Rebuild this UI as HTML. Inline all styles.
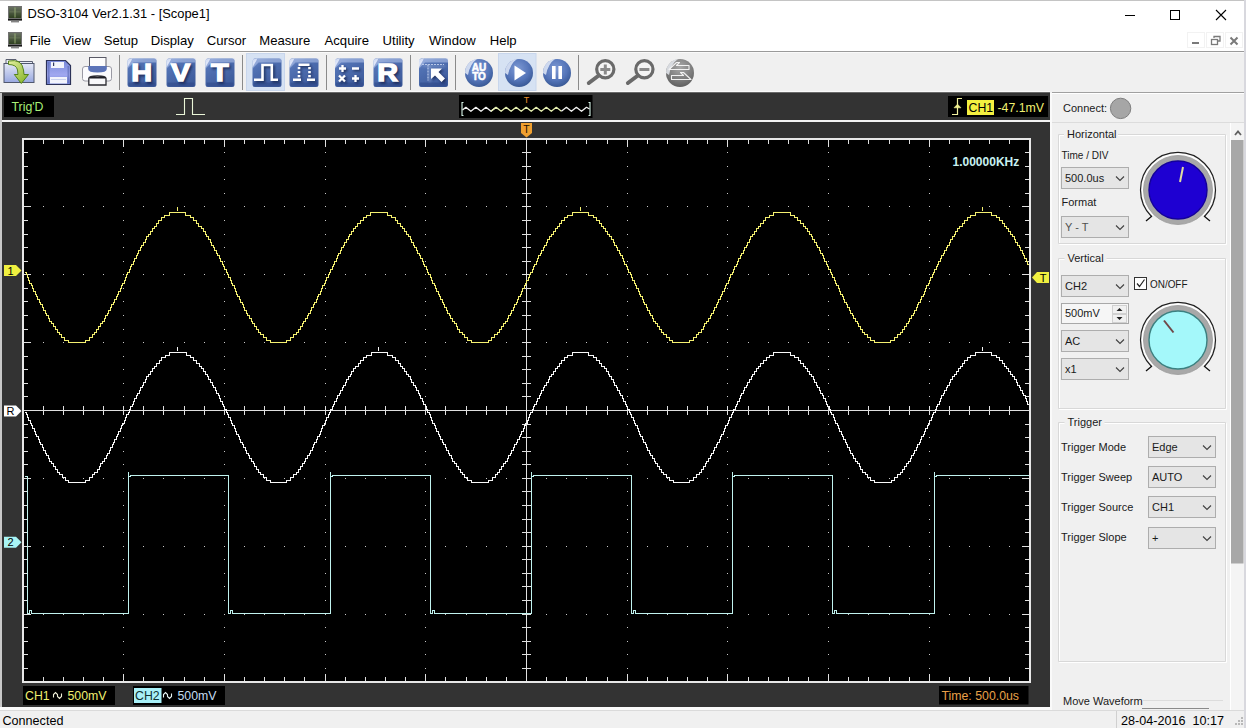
<!DOCTYPE html>
<html><head><meta charset="utf-8"><title>DSO-3104</title>
<style>html,body{margin:0;padding:0;background:#f0f0f0;overflow:hidden;width:1246px;height:728px}svg{display:block}</style>
</head><body>
<svg width="1246" height="728" viewBox="0 0 1246 728">
<rect x="0" y="0" width="1246" height="728" fill="#f0f0f0"/>
<rect x="0" y="0" width="1246" height="51" fill="#ffffff"/>
<rect x="0" y="0" width="1246" height="1" fill="#c4c4c4"/>
<rect x="0" y="51" width="1246" height="1" fill="#9a9a9a"/>
<rect x="0" y="52" width="1246" height="1" fill="#fafafa"/>
<rect x="0" y="91" width="1050" height="1" fill="#fafafa"/>
<rect x="1052" y="92" width="192" height="1" fill="#a0a0a0"/>
<rect x="1052" y="93" width="192" height="1" fill="#ffffff"/>
<rect x="1244" y="0" width="2" height="728" fill="#d8d8de"/>
<g transform="translate(8,6)"><rect x="0" y="0" width="14" height="13" fill="#707070"/><rect x="1" y="1" width="12" height="11" fill="url(#scr)"/><rect x="6.5" y="1.5" width="1" height="10" fill="#a8c080" opacity="0.8"/><rect x="1.5" y="5.5" width="11" height="0.8" fill="#8a9a70" opacity="0.5"/><rect x="0" y="13" width="14" height="1.6" fill="#181818"/><rect x="3" y="15.3" width="8" height="1" fill="#505050"/></g>
<text x="27.5" y="18" font-family="Liberation Sans, sans-serif" font-size="12.9" fill="#000">DSO-3104 Ver2.1.31 - [Scope1]</text>
<rect x="1125" y="15" width="10" height="1" fill="#000"/>
<rect x="1170.5" y="10.5" width="9" height="9" fill="none" stroke="#000" stroke-width="1"/>
<path d="M1216 10 L1226 20 M1226 10 L1216 20" stroke="#000" stroke-width="1.1"/>
<g transform="translate(8,32)"><rect x="0" y="0" width="14" height="13" fill="#707070"/><rect x="1" y="1" width="12" height="11" fill="url(#scr)"/><rect x="6.5" y="1.5" width="1" height="10" fill="#a8c080" opacity="0.8"/><rect x="1.5" y="5.5" width="11" height="0.8" fill="#8a9a70" opacity="0.5"/><rect x="0" y="13" width="14" height="1.6" fill="#181818"/><rect x="3" y="15.3" width="8" height="1" fill="#505050"/></g>
<text x="29.8" y="45" font-family="Liberation Sans, sans-serif" font-size="13.1" fill="#000">File</text>
<text x="62.8" y="45" font-family="Liberation Sans, sans-serif" font-size="13.1" fill="#000">View</text>
<text x="103.8" y="45" font-family="Liberation Sans, sans-serif" font-size="13.1" fill="#000">Setup</text>
<text x="150.8" y="45" font-family="Liberation Sans, sans-serif" font-size="13.1" fill="#000">Display</text>
<text x="206.8" y="45" font-family="Liberation Sans, sans-serif" font-size="13.1" fill="#000">Cursor</text>
<text x="259.3" y="45" font-family="Liberation Sans, sans-serif" font-size="13.1" fill="#000">Measure</text>
<text x="324.6" y="45" font-family="Liberation Sans, sans-serif" font-size="13.1" fill="#000">Acquire</text>
<text x="382.6" y="45" font-family="Liberation Sans, sans-serif" font-size="13.1" fill="#000">Utility</text>
<text x="429.1" y="45" font-family="Liberation Sans, sans-serif" font-size="13.1" fill="#000">Window</text>
<text x="489.7" y="45" font-family="Liberation Sans, sans-serif" font-size="13.1" fill="#000">Help</text>
<rect x="1187.5" y="32.5" width="17" height="15" fill="none" stroke="#e4e4e4" stroke-width="1" stroke-dasharray="1,1"/>
<rect x="1206.5" y="32.5" width="17" height="15" fill="none" stroke="#e4e4e4" stroke-width="1" stroke-dasharray="1,1"/>
<rect x="1225.5" y="32.5" width="17" height="15" fill="none" stroke="#e4e4e4" stroke-width="1" stroke-dasharray="1,1"/>
<rect x="1192" y="42" width="7" height="2" fill="#7a7a7a"/>
<rect x="1211.5" y="39.5" width="6" height="5" fill="none" stroke="#7a7a7a" stroke-width="1.3"/><path d="M1214 38 V36.5 H1220 V41 H1218" fill="none" stroke="#7a7a7a" stroke-width="1.3"/>
<path d="M1230.5 37.5 L1237.5 44.5 M1237.5 37.5 L1230.5 44.5" stroke="#7a7a7a" stroke-width="2"/>
<rect x="119.0" y="55" width="1" height="35" fill="#8a8a8a"/>
<rect x="242.0" y="55" width="1" height="35" fill="#8a8a8a"/>
<rect x="326.0" y="55" width="1" height="35" fill="#8a8a8a"/>
<rect x="410.0" y="55" width="1" height="35" fill="#8a8a8a"/>
<rect x="455.0" y="55" width="1" height="35" fill="#8a8a8a"/>
<rect x="578.0" y="55" width="1" height="35" fill="#8a8a8a"/>
<rect x="246.5" y="53.5" width="38" height="37" fill="#d6e2f3" stroke="#c8d6ec" stroke-width="1"/>
<rect x="498.5" y="53.5" width="37.5" height="37" fill="#d6e2f3" stroke="#c8d6ec" stroke-width="1"/>
<defs>
<linearGradient id="scr" x1="0" y1="0" x2="0" y2="1"><stop offset="0" stop-color="#6a7262"/><stop offset="1" stop-color="#2e4020"/></linearGradient>
<linearGradient id="bsq" x1="0" y1="0" x2="0.6" y2="1"><stop offset="0" stop-color="#7a96d0"/><stop offset="0.3" stop-color="#5272b4"/><stop offset="1" stop-color="#3e5c9c"/></linearGradient><filter id="soft" x="-10%" y="-10%" width="120%" height="120%"><feGaussianBlur stdDeviation="0.7"/></filter><filter id="shad" x="-20%" y="-20%" width="140%" height="140%"><feGaussianBlur stdDeviation="1.2"/></filter>
<radialGradient id="bcirc" cx="0.45" cy="0.35" r="0.7"><stop offset="0" stop-color="#7e9ad4"/><stop offset="0.6" stop-color="#5474b8"/><stop offset="1" stop-color="#34548f"/></radialGradient>
<radialGradient id="gcirc" cx="0.5" cy="0.3" r="0.75"><stop offset="0" stop-color="#a8a8a8"/><stop offset="0.6" stop-color="#7c7c7c"/><stop offset="1" stop-color="#5a5a5a"/></radialGradient>
<linearGradient id="folder" x1="0" y1="0" x2="0" y2="1"><stop offset="0" stop-color="#e4e8f6"/><stop offset="1" stop-color="#98a8e0"/></linearGradient><linearGradient id="flop" x1="0" y1="0" x2="0" y2="1"><stop offset="0" stop-color="#7888d8"/><stop offset="0.6" stop-color="#a0a8f0"/><stop offset="1" stop-color="#7080d0"/></linearGradient>
<linearGradient id="arrowg" x1="0" y1="0" x2="1" y2="1"><stop offset="0" stop-color="#e4f0a0"/><stop offset="1" stop-color="#80b020"/></linearGradient>
</defs>
<g transform="translate(127.5,58.5)"><g filter="url(#soft)"><rect x="0" y="0" width="29" height="28.5" rx="2.5" fill="url(#bsq)"/><rect x="1" y="24" width="27" height="4" fill="#2c4484" opacity="0.5"/><path d="M0 4 L6 0 H29 V4 H6 L0 10 Z" fill="#b8c8ec" opacity="0.55"/><path d="M0 1 L5 0 L0 9 Z" fill="#f0f4ff" opacity="0.8"/></g><g transform="translate(1.6,1.6)" filter="url(#shad)" opacity="0.75"><text x="0" y="0" transform="translate(14.2,22.6) scale(1.2,1)" text-anchor="middle" font-family="Liberation Sans, sans-serif" font-size="24" font-weight="bold" fill="#14204a" stroke="#14204a" stroke-width="1.3">H</text></g><text x="0" y="0" transform="translate(14.2,22.6) scale(1.2,1)" text-anchor="middle" font-family="Liberation Sans, sans-serif" font-size="24" font-weight="bold" fill="#fff" stroke="#fff" stroke-width="1.3">H</text></g>
<g transform="translate(166.5,58.5)"><g filter="url(#soft)"><rect x="0" y="0" width="29" height="28.5" rx="2.5" fill="url(#bsq)"/><rect x="1" y="24" width="27" height="4" fill="#2c4484" opacity="0.5"/><path d="M0 4 L6 0 H29 V4 H6 L0 10 Z" fill="#b8c8ec" opacity="0.55"/><path d="M0 1 L5 0 L0 9 Z" fill="#f0f4ff" opacity="0.8"/></g><g transform="translate(1.6,1.6)" filter="url(#shad)" opacity="0.75"><text x="0" y="0" transform="translate(14.2,22.6) scale(1.2,1)" text-anchor="middle" font-family="Liberation Sans, sans-serif" font-size="24" font-weight="bold" fill="#14204a" stroke="#14204a" stroke-width="1.3">V</text></g><text x="0" y="0" transform="translate(14.2,22.6) scale(1.2,1)" text-anchor="middle" font-family="Liberation Sans, sans-serif" font-size="24" font-weight="bold" fill="#fff" stroke="#fff" stroke-width="1.3">V</text></g>
<g transform="translate(205.5,58.5)"><g filter="url(#soft)"><rect x="0" y="0" width="29" height="28.5" rx="2.5" fill="url(#bsq)"/><rect x="1" y="24" width="27" height="4" fill="#2c4484" opacity="0.5"/><path d="M0 4 L6 0 H29 V4 H6 L0 10 Z" fill="#b8c8ec" opacity="0.55"/><path d="M0 1 L5 0 L0 9 Z" fill="#f0f4ff" opacity="0.8"/></g><g transform="translate(1.6,1.6)" filter="url(#shad)" opacity="0.75"><text x="0" y="0" transform="translate(14.2,22.6) scale(1.2,1)" text-anchor="middle" font-family="Liberation Sans, sans-serif" font-size="24" font-weight="bold" fill="#14204a" stroke="#14204a" stroke-width="1.3">T</text></g><text x="0" y="0" transform="translate(14.2,22.6) scale(1.2,1)" text-anchor="middle" font-family="Liberation Sans, sans-serif" font-size="24" font-weight="bold" fill="#fff" stroke="#fff" stroke-width="1.3">T</text></g>
<g transform="translate(252.5,58.5)"><g filter="url(#soft)"><rect x="0" y="0" width="29" height="28.5" rx="2.5" fill="url(#bsq)"/><rect x="1" y="24" width="27" height="4" fill="#2c4484" opacity="0.5"/><path d="M0 4 L6 0 H29 V4 H6 L0 10 Z" fill="#b8c8ec" opacity="0.55"/><path d="M0 1 L5 0 L0 9 Z" fill="#f0f4ff" opacity="0.8"/></g><g transform="translate(1.6,1.6)" filter="url(#shad)" opacity="0.75"><path d="M1.5 21.3 H10 V6.5 H19.3 V21.3 H25.5" fill="none" stroke="#14204a" stroke-width="2.6"/></g><path d="M1.5 21.3 H10 V6.5 H19.3 V21.3 H25.5" fill="none" stroke="#fff" stroke-width="2.6"/></g>
<g transform="translate(289.5,58.5)"><g filter="url(#soft)"><rect x="0" y="0" width="29" height="28.5" rx="2.5" fill="url(#bsq)"/><rect x="1" y="24" width="27" height="4" fill="#2c4484" opacity="0.5"/><path d="M0 4 L6 0 H29 V4 H6 L0 10 Z" fill="#b8c8ec" opacity="0.55"/><path d="M0 1 L5 0 L0 9 Z" fill="#f0f4ff" opacity="0.8"/></g><g transform="translate(1.6,1.6)" filter="url(#shad)" opacity="0.75"><path d="M3.5 21.3 H11.5 M17.5 21.3 H25.5 M9 6.2 H20" stroke="#14204a" stroke-width="2.4"/><path d="M9.5 8.5 V20 M20 8.5 V20" stroke="#14204a" stroke-width="2.6" stroke-dasharray="2.2,1.8"/></g><path d="M3.5 21.3 H11.5 M17.5 21.3 H25.5 M9 6.2 H20" stroke="#fff" stroke-width="2.4"/><path d="M9.5 8.5 V20 M20 8.5 V20" stroke="#fff" stroke-width="2.6" stroke-dasharray="2.2,1.8"/></g>
<g transform="translate(335,58.5)"><g filter="url(#soft)"><rect x="0" y="0" width="29" height="28.5" rx="2.5" fill="url(#bsq)"/><rect x="1" y="24" width="27" height="4" fill="#2c4484" opacity="0.5"/><path d="M0 4 L6 0 H29 V4 H6 L0 10 Z" fill="#b8c8ec" opacity="0.55"/><path d="M0 1 L5 0 L0 9 Z" fill="#f0f4ff" opacity="0.8"/></g><g transform="translate(1.6,1.6)" filter="url(#shad)" opacity="0.75"><path d="M4 10 H11 M7.5 6.5 V13.5 M17 10 H24 M4 17 L10 23 M10 17 L4 23 M17 20 H24 M20.5 16.5 V23.5" stroke="#14204a" stroke-width="2.3"/></g><path d="M4 10 H11 M7.5 6.5 V13.5 M17 10 H24 M4 17 L10 23 M10 17 L4 23 M17 20 H24 M20.5 16.5 V23.5" stroke="#fff" stroke-width="2.3"/></g>
<g transform="translate(373.5,58.5)"><g filter="url(#soft)"><rect x="0" y="0" width="29" height="28.5" rx="2.5" fill="url(#bsq)"/><rect x="1" y="24" width="27" height="4" fill="#2c4484" opacity="0.5"/><path d="M0 4 L6 0 H29 V4 H6 L0 10 Z" fill="#b8c8ec" opacity="0.55"/><path d="M0 1 L5 0 L0 9 Z" fill="#f0f4ff" opacity="0.8"/></g><g transform="translate(1.6,1.6)" filter="url(#shad)" opacity="0.75"><text x="0" y="0" transform="translate(14.2,22.6) scale(1.2,1)" text-anchor="middle" font-family="Liberation Sans, sans-serif" font-size="24" font-weight="bold" fill="#14204a" stroke="#14204a" stroke-width="1.3">R</text></g><text x="0" y="0" transform="translate(14.2,22.6) scale(1.2,1)" text-anchor="middle" font-family="Liberation Sans, sans-serif" font-size="24" font-weight="bold" fill="#fff" stroke="#fff" stroke-width="1.3">R</text></g>
<g transform="translate(419,58.5)"><g filter="url(#soft)"><rect x="0" y="0" width="29" height="28.5" rx="2.5" fill="url(#bsq)"/><rect x="1" y="24" width="27" height="4" fill="#2c4484" opacity="0.5"/><path d="M0 4 L6 0 H29 V4 H6 L0 10 Z" fill="#b8c8ec" opacity="0.55"/><path d="M0 1 L5 0 L0 9 Z" fill="#f0f4ff" opacity="0.8"/></g><g transform="translate(1.6,1.6)" filter="url(#shad)" opacity="0.75"><path d="M3 6 H25 M9 6 V22" stroke="#b8c8e8" stroke-width="1.2" stroke-dasharray="2,1"/><path d="M12 10 L23 10 L19.5 13.5 L26 20 L22.5 23.5 L16 17 L12 20.5 Z" fill="#14204a"/></g><path d="M3 6 H25 M9 6 V22" stroke="#b8c8e8" stroke-width="1.2" stroke-dasharray="2,1"/><path d="M12 10 L23 10 L19.5 13.5 L26 20 L22.5 23.5 L16 17 L12 20.5 Z" fill="#fff"/></g>
<g transform="translate(479,73)"><g filter="url(#soft)"><circle r="14" fill="url(#bcirc)"/><path d="M-14 0 A14 14 0 0 1 -2 -13.9 Q-9 -9 -11 2 Z" fill="#f4f8ff" opacity="0.75"/></g><text x="0" y="-2.2" text-anchor="middle" font-family="Liberation Sans, sans-serif" font-size="10" font-weight="bold" fill="#fff" stroke="#fff" stroke-width="0.5">AU</text><text x="0" y="7" text-anchor="middle" font-family="Liberation Sans, sans-serif" font-size="10" font-weight="bold" fill="#fff" stroke="#fff" stroke-width="0.5">TO</text></g>
<g transform="translate(519,73)"><g filter="url(#soft)"><circle r="14" fill="url(#bcirc)"/><path d="M-14 0 A14 14 0 0 1 -2 -13.9 Q-9 -9 -11 2 Z" fill="#f4f8ff" opacity="0.75"/></g><path d="M-4.5 -7.5 L7 0 L-4.5 7.5 Z" fill="#fff"/></g>
<g transform="translate(557,73)"><g filter="url(#soft)"><circle r="14" fill="url(#bcirc)"/><path d="M-14 0 A14 14 0 0 1 -2 -13.9 Q-9 -9 -11 2 Z" fill="#f4f8ff" opacity="0.75"/></g><rect x="-5" y="-7" width="3.6" height="13" fill="#fff"/><rect x="1.4" y="-7" width="3.6" height="13" fill="#fff"/></g>
<circle cx="605.3" cy="69.3" r="8.6" fill="#f4f4f4" stroke="#6a6a6a" stroke-width="3.2"/>
<path d="M598.8 75.5 L588.8 83" stroke="#6a6a6a" stroke-width="4" stroke-linecap="round"/>
<rect x="600.3" y="68" width="10" height="3" fill="#8a8a8a"/>
<rect x="603.8" y="64.5" width="3" height="10" fill="#8a8a8a"/>
<circle cx="644.4" cy="69.3" r="8.6" fill="#f4f4f4" stroke="#6a6a6a" stroke-width="3.2"/>
<path d="M637.9 75.5 L627.9 83" stroke="#6a6a6a" stroke-width="4" stroke-linecap="round"/>
<rect x="639.4" y="68" width="10" height="3" fill="#8a8a8a"/>
<g transform="translate(680,73)"><g filter="url(#soft)"><circle r="14" fill="url(#gcirc)"/><path d="M-14 0 A14 14 0 0 1 -2 -13.9 Q-9 -9 -11 2 Z" fill="#f4f8ff" opacity="0.75"/></g><path d="M9 -7.5 H-3.5 L-0.5 -10.5 H-3.5 L-11 -3.5 H9 Z M-8.5 2.5 H3.5 L0.5 -0.5 H3.5 L11 6.5 H-8.5 Z" fill="none" stroke="#f2f2f2" stroke-width="1.1" stroke-linejoin="round"/></g>
<path d="M6 61.5 V59.5 H16 L17.5 61.5 H32.5 V64 H6 Z" fill="#e8ecf6" stroke="#5a5f70" stroke-width="1"/>
<rect x="4" y="63.5" width="30" height="19" fill="url(#folder)" stroke="#50586e" stroke-width="1"/>
<path d="M8.5 61 Q22 58.5 23.5 70 L24 74.5 L28.5 74.5 L21.3 83.5 L14.3 74.5 L18 74.5 L17.5 70 Q16.5 64.5 8.5 64.5 Z" fill="url(#arrowg)" stroke="#4a7a10" stroke-width="0.9"/>
<path d="M46.5 60.5 H65.5 L70.5 65.5 V84.5 H46.5 Z" fill="url(#flop)" stroke="#2c3258" stroke-width="1.2"/>
<rect x="51" y="62" width="13" height="6" fill="#f2f4fc"/><rect x="53" y="62.5" width="1.2" height="3.5" fill="#303860"/>
<rect x="50" y="77" width="17" height="6.5" fill="#f2f4fc"/><rect x="51" y="79" width="15" height="0.7" fill="#b8c4e8"/>
<rect x="48" y="62" width="1.5" height="21" fill="#5868b0" opacity="0.6"/><rect x="67.5" y="66" width="1.5" height="17" fill="#5868b0" opacity="0.6"/>
<rect x="82.5" y="66.5" width="29" height="14.5" rx="2.5" fill="#fbfbfd" stroke="#9a9aa4" stroke-width="1"/>
<rect x="89.5" y="57.5" width="16.5" height="9" fill="#fdfdfd" stroke="#5a5a66" stroke-width="1"/>
<path d="M88.2 66 H106.8 V69 Q106.8 72.5 97.5 72.5 Q88.2 72.5 88.2 69 Z" fill="#5c74b8"/>
<path d="M88.8 78.5 Q88.8 76 97.5 76 Q106 76 106 78.5 V85 H88.8 Z" fill="#f8f8fa" stroke="#2a2a30" stroke-width="1.3"/>
<rect x="89.5" y="77" width="16" height="1.5" fill="#202028"/>
<rect x="0" y="92" width="1050" height="1" fill="#6a6a6a"/>
<rect x="0" y="93" width="1050" height="614" fill="#333333"/>
<rect x="0" y="93" width="2" height="617" fill="#c8c8c8"/>
<rect x="1050" y="93" width="2" height="617" fill="#fafafa"/>
<rect x="0" y="707" width="1052" height="3" fill="#fafafa"/>
<rect x="2" y="120" width="1048" height="2" fill="#f4f4f4"/>
<rect x="4" y="96" width="50" height="21" fill="#000"/>
<text x="11.5" y="111" font-family="Liberation Sans, sans-serif" font-size="12.3" fill="#a8f078">Trig'D</text>
<path d="M176 114.5 H184.5 V98.5 H192.5 V114.5 H205" fill="none" stroke="#eaf6d8" stroke-width="1.1"/>
<rect x="459" y="95" width="133.5" height="23" fill="#000"/>
<polyline points="462.5,110 465.9,107.3 470.9,111.3 475.9,107.3 481.0,111.3 486.0,107.3 491.0,111.3 496.1,107.3" fill="none" stroke="#f4f4f4" stroke-width="1.3" stroke-linejoin="round"/>
<polyline points="491.0,111.3 496.1,107.3 501.1,111.3 506.1,107.3 511.1,111.3 516.1,107.3 521.2,111.3 526.2,107.3 531.2,111.3 536.2,107.3 541.3,111.3 546.3,107.3 551.3,111.3 556.3,107.3 561.4,111.3" fill="none" stroke="#e6f0b0" stroke-width="1.3" stroke-linejoin="round"/>
<polyline points="561.4,111.3 566.4,107.3 571.4,111.3 576.4,107.3 581.5,111.3 586.5,107.3 589.5,109" fill="none" stroke="#f4f4f4" stroke-width="1.3" stroke-linejoin="round"/>
<path d="M463.5 102.5 H462 V115.5 H463.5 M588.5 102.5 H590 V115.5 H588.5" fill="none" stroke="#d8f4e8" stroke-width="1.1"/>
<text x="526.5" y="103" text-anchor="middle" font-family="Liberation Sans, sans-serif" font-size="9" fill="#e89030">T</text>
<rect x="948" y="96" width="100" height="21" fill="#000"/>
<path d="M952 114.5 H957.5 V98.5 H962" fill="none" stroke="#f2f2a0" stroke-width="1.2"/><path d="M954 107.8 L957.5 104.2 L961 107.8 Z" fill="#f2f290" stroke="#f2f290" stroke-width="0.6"/>
<rect x="967" y="100" width="27" height="15" fill="#f4f040"/>
<text x="968.5" y="112" font-family="Liberation Sans, sans-serif" font-size="12.3" fill="#000">CH1</text>
<text x="997.5" y="112" font-family="Liberation Sans, sans-serif" font-size="12.3" fill="#f0f070">-47.1mV</text>
<rect x="22" y="138" width="1009" height="545" fill="#e8e8e8"/>
<rect x="24" y="140" width="1005" height="541" fill="#000"/>
<path d="M43 206h1v1h-1zM63 206h1v1h-1zM83 206h1v1h-1zM103 206h1v1h-1zM143 206h1v1h-1zM163 206h1v1h-1zM184 206h1v1h-1zM204 206h1v1h-1zM244 206h1v1h-1zM264 206h1v1h-1zM284 206h1v1h-1zM304 206h1v1h-1zM345 206h1v1h-1zM365 206h1v1h-1zM385 206h1v1h-1zM405 206h1v1h-1zM445 206h1v1h-1zM466 206h1v1h-1zM486 206h1v1h-1zM506 206h1v1h-1zM546 206h1v1h-1zM566 206h1v1h-1zM586 206h1v1h-1zM607 206h1v1h-1zM647 206h1v1h-1zM667 206h1v1h-1zM687 206h1v1h-1zM707 206h1v1h-1zM748 206h1v1h-1zM768 206h1v1h-1zM788 206h1v1h-1zM808 206h1v1h-1zM848 206h1v1h-1zM868 206h1v1h-1zM889 206h1v1h-1zM909 206h1v1h-1zM949 206h1v1h-1zM969 206h1v1h-1zM989 206h1v1h-1zM1009 206h1v1h-1zM43 274h1v1h-1zM63 274h1v1h-1zM83 274h1v1h-1zM103 274h1v1h-1zM143 274h1v1h-1zM163 274h1v1h-1zM184 274h1v1h-1zM204 274h1v1h-1zM244 274h1v1h-1zM264 274h1v1h-1zM284 274h1v1h-1zM304 274h1v1h-1zM345 274h1v1h-1zM365 274h1v1h-1zM385 274h1v1h-1zM405 274h1v1h-1zM445 274h1v1h-1zM466 274h1v1h-1zM486 274h1v1h-1zM506 274h1v1h-1zM546 274h1v1h-1zM566 274h1v1h-1zM586 274h1v1h-1zM607 274h1v1h-1zM647 274h1v1h-1zM667 274h1v1h-1zM687 274h1v1h-1zM707 274h1v1h-1zM748 274h1v1h-1zM768 274h1v1h-1zM788 274h1v1h-1zM808 274h1v1h-1zM848 274h1v1h-1zM868 274h1v1h-1zM889 274h1v1h-1zM909 274h1v1h-1zM949 274h1v1h-1zM969 274h1v1h-1zM989 274h1v1h-1zM1009 274h1v1h-1zM43 342h1v1h-1zM63 342h1v1h-1zM83 342h1v1h-1zM103 342h1v1h-1zM143 342h1v1h-1zM163 342h1v1h-1zM184 342h1v1h-1zM204 342h1v1h-1zM244 342h1v1h-1zM264 342h1v1h-1zM284 342h1v1h-1zM304 342h1v1h-1zM345 342h1v1h-1zM365 342h1v1h-1zM385 342h1v1h-1zM405 342h1v1h-1zM445 342h1v1h-1zM466 342h1v1h-1zM486 342h1v1h-1zM506 342h1v1h-1zM546 342h1v1h-1zM566 342h1v1h-1zM586 342h1v1h-1zM607 342h1v1h-1zM647 342h1v1h-1zM667 342h1v1h-1zM687 342h1v1h-1zM707 342h1v1h-1zM748 342h1v1h-1zM768 342h1v1h-1zM788 342h1v1h-1zM808 342h1v1h-1zM848 342h1v1h-1zM868 342h1v1h-1zM889 342h1v1h-1zM909 342h1v1h-1zM949 342h1v1h-1zM969 342h1v1h-1zM989 342h1v1h-1zM1009 342h1v1h-1zM43 478h1v1h-1zM63 478h1v1h-1zM83 478h1v1h-1zM103 478h1v1h-1zM143 478h1v1h-1zM163 478h1v1h-1zM184 478h1v1h-1zM204 478h1v1h-1zM244 478h1v1h-1zM264 478h1v1h-1zM284 478h1v1h-1zM304 478h1v1h-1zM345 478h1v1h-1zM365 478h1v1h-1zM385 478h1v1h-1zM405 478h1v1h-1zM445 478h1v1h-1zM466 478h1v1h-1zM486 478h1v1h-1zM506 478h1v1h-1zM546 478h1v1h-1zM566 478h1v1h-1zM586 478h1v1h-1zM607 478h1v1h-1zM647 478h1v1h-1zM667 478h1v1h-1zM687 478h1v1h-1zM707 478h1v1h-1zM748 478h1v1h-1zM768 478h1v1h-1zM788 478h1v1h-1zM808 478h1v1h-1zM848 478h1v1h-1zM868 478h1v1h-1zM889 478h1v1h-1zM909 478h1v1h-1zM949 478h1v1h-1zM969 478h1v1h-1zM989 478h1v1h-1zM1009 478h1v1h-1zM43 546h1v1h-1zM63 546h1v1h-1zM83 546h1v1h-1zM103 546h1v1h-1zM143 546h1v1h-1zM163 546h1v1h-1zM184 546h1v1h-1zM204 546h1v1h-1zM244 546h1v1h-1zM264 546h1v1h-1zM284 546h1v1h-1zM304 546h1v1h-1zM345 546h1v1h-1zM365 546h1v1h-1zM385 546h1v1h-1zM405 546h1v1h-1zM445 546h1v1h-1zM466 546h1v1h-1zM486 546h1v1h-1zM506 546h1v1h-1zM546 546h1v1h-1zM566 546h1v1h-1zM586 546h1v1h-1zM607 546h1v1h-1zM647 546h1v1h-1zM667 546h1v1h-1zM687 546h1v1h-1zM707 546h1v1h-1zM748 546h1v1h-1zM768 546h1v1h-1zM788 546h1v1h-1zM808 546h1v1h-1zM848 546h1v1h-1zM868 546h1v1h-1zM889 546h1v1h-1zM909 546h1v1h-1zM949 546h1v1h-1zM969 546h1v1h-1zM989 546h1v1h-1zM1009 546h1v1h-1zM43 614h1v1h-1zM63 614h1v1h-1zM83 614h1v1h-1zM103 614h1v1h-1zM143 614h1v1h-1zM163 614h1v1h-1zM184 614h1v1h-1zM204 614h1v1h-1zM244 614h1v1h-1zM264 614h1v1h-1zM284 614h1v1h-1zM304 614h1v1h-1zM345 614h1v1h-1zM365 614h1v1h-1zM385 614h1v1h-1zM405 614h1v1h-1zM445 614h1v1h-1zM466 614h1v1h-1zM486 614h1v1h-1zM506 614h1v1h-1zM546 614h1v1h-1zM566 614h1v1h-1zM586 614h1v1h-1zM607 614h1v1h-1zM647 614h1v1h-1zM667 614h1v1h-1zM687 614h1v1h-1zM707 614h1v1h-1zM748 614h1v1h-1zM768 614h1v1h-1zM788 614h1v1h-1zM808 614h1v1h-1zM848 614h1v1h-1zM868 614h1v1h-1zM889 614h1v1h-1zM909 614h1v1h-1zM949 614h1v1h-1zM969 614h1v1h-1zM989 614h1v1h-1zM1009 614h1v1h-1zM123 152h1v1h-1zM123 166h1v1h-1zM123 179h1v1h-1zM123 193h1v1h-1zM123 206h1v1h-1zM123 220h1v1h-1zM123 234h1v1h-1zM123 247h1v1h-1zM123 261h1v1h-1zM123 274h1v1h-1zM123 288h1v1h-1zM123 301h1v1h-1zM123 315h1v1h-1zM123 329h1v1h-1zM123 342h1v1h-1zM123 356h1v1h-1zM123 369h1v1h-1zM123 383h1v1h-1zM123 396h1v1h-1zM123 410h1v1h-1zM123 424h1v1h-1zM123 437h1v1h-1zM123 451h1v1h-1zM123 464h1v1h-1zM123 478h1v1h-1zM123 491h1v1h-1zM123 505h1v1h-1zM123 519h1v1h-1zM123 532h1v1h-1zM123 546h1v1h-1zM123 559h1v1h-1zM123 573h1v1h-1zM123 586h1v1h-1zM123 600h1v1h-1zM123 614h1v1h-1zM123 627h1v1h-1zM123 641h1v1h-1zM123 654h1v1h-1zM123 668h1v1h-1zM224 152h1v1h-1zM224 166h1v1h-1zM224 179h1v1h-1zM224 193h1v1h-1zM224 206h1v1h-1zM224 220h1v1h-1zM224 234h1v1h-1zM224 247h1v1h-1zM224 261h1v1h-1zM224 274h1v1h-1zM224 288h1v1h-1zM224 301h1v1h-1zM224 315h1v1h-1zM224 329h1v1h-1zM224 342h1v1h-1zM224 356h1v1h-1zM224 369h1v1h-1zM224 383h1v1h-1zM224 396h1v1h-1zM224 410h1v1h-1zM224 424h1v1h-1zM224 437h1v1h-1zM224 451h1v1h-1zM224 464h1v1h-1zM224 478h1v1h-1zM224 491h1v1h-1zM224 505h1v1h-1zM224 519h1v1h-1zM224 532h1v1h-1zM224 546h1v1h-1zM224 559h1v1h-1zM224 573h1v1h-1zM224 586h1v1h-1zM224 600h1v1h-1zM224 614h1v1h-1zM224 627h1v1h-1zM224 641h1v1h-1zM224 654h1v1h-1zM224 668h1v1h-1zM325 152h1v1h-1zM325 166h1v1h-1zM325 179h1v1h-1zM325 193h1v1h-1zM325 206h1v1h-1zM325 220h1v1h-1zM325 234h1v1h-1zM325 247h1v1h-1zM325 261h1v1h-1zM325 274h1v1h-1zM325 288h1v1h-1zM325 301h1v1h-1zM325 315h1v1h-1zM325 329h1v1h-1zM325 342h1v1h-1zM325 356h1v1h-1zM325 369h1v1h-1zM325 383h1v1h-1zM325 396h1v1h-1zM325 410h1v1h-1zM325 424h1v1h-1zM325 437h1v1h-1zM325 451h1v1h-1zM325 464h1v1h-1zM325 478h1v1h-1zM325 491h1v1h-1zM325 505h1v1h-1zM325 519h1v1h-1zM325 532h1v1h-1zM325 546h1v1h-1zM325 559h1v1h-1zM325 573h1v1h-1zM325 586h1v1h-1zM325 600h1v1h-1zM325 614h1v1h-1zM325 627h1v1h-1zM325 641h1v1h-1zM325 654h1v1h-1zM325 668h1v1h-1zM425 152h1v1h-1zM425 166h1v1h-1zM425 179h1v1h-1zM425 193h1v1h-1zM425 206h1v1h-1zM425 220h1v1h-1zM425 234h1v1h-1zM425 247h1v1h-1zM425 261h1v1h-1zM425 274h1v1h-1zM425 288h1v1h-1zM425 301h1v1h-1zM425 315h1v1h-1zM425 329h1v1h-1zM425 342h1v1h-1zM425 356h1v1h-1zM425 369h1v1h-1zM425 383h1v1h-1zM425 396h1v1h-1zM425 410h1v1h-1zM425 424h1v1h-1zM425 437h1v1h-1zM425 451h1v1h-1zM425 464h1v1h-1zM425 478h1v1h-1zM425 491h1v1h-1zM425 505h1v1h-1zM425 519h1v1h-1zM425 532h1v1h-1zM425 546h1v1h-1zM425 559h1v1h-1zM425 573h1v1h-1zM425 586h1v1h-1zM425 600h1v1h-1zM425 614h1v1h-1zM425 627h1v1h-1zM425 641h1v1h-1zM425 654h1v1h-1zM425 668h1v1h-1zM627 152h1v1h-1zM627 166h1v1h-1zM627 179h1v1h-1zM627 193h1v1h-1zM627 206h1v1h-1zM627 220h1v1h-1zM627 234h1v1h-1zM627 247h1v1h-1zM627 261h1v1h-1zM627 274h1v1h-1zM627 288h1v1h-1zM627 301h1v1h-1zM627 315h1v1h-1zM627 329h1v1h-1zM627 342h1v1h-1zM627 356h1v1h-1zM627 369h1v1h-1zM627 383h1v1h-1zM627 396h1v1h-1zM627 410h1v1h-1zM627 424h1v1h-1zM627 437h1v1h-1zM627 451h1v1h-1zM627 464h1v1h-1zM627 478h1v1h-1zM627 491h1v1h-1zM627 505h1v1h-1zM627 519h1v1h-1zM627 532h1v1h-1zM627 546h1v1h-1zM627 559h1v1h-1zM627 573h1v1h-1zM627 586h1v1h-1zM627 600h1v1h-1zM627 614h1v1h-1zM627 627h1v1h-1zM627 641h1v1h-1zM627 654h1v1h-1zM627 668h1v1h-1zM727 152h1v1h-1zM727 166h1v1h-1zM727 179h1v1h-1zM727 193h1v1h-1zM727 206h1v1h-1zM727 220h1v1h-1zM727 234h1v1h-1zM727 247h1v1h-1zM727 261h1v1h-1zM727 274h1v1h-1zM727 288h1v1h-1zM727 301h1v1h-1zM727 315h1v1h-1zM727 329h1v1h-1zM727 342h1v1h-1zM727 356h1v1h-1zM727 369h1v1h-1zM727 383h1v1h-1zM727 396h1v1h-1zM727 410h1v1h-1zM727 424h1v1h-1zM727 437h1v1h-1zM727 451h1v1h-1zM727 464h1v1h-1zM727 478h1v1h-1zM727 491h1v1h-1zM727 505h1v1h-1zM727 519h1v1h-1zM727 532h1v1h-1zM727 546h1v1h-1zM727 559h1v1h-1zM727 573h1v1h-1zM727 586h1v1h-1zM727 600h1v1h-1zM727 614h1v1h-1zM727 627h1v1h-1zM727 641h1v1h-1zM727 654h1v1h-1zM727 668h1v1h-1zM828 152h1v1h-1zM828 166h1v1h-1zM828 179h1v1h-1zM828 193h1v1h-1zM828 206h1v1h-1zM828 220h1v1h-1zM828 234h1v1h-1zM828 247h1v1h-1zM828 261h1v1h-1zM828 274h1v1h-1zM828 288h1v1h-1zM828 301h1v1h-1zM828 315h1v1h-1zM828 329h1v1h-1zM828 342h1v1h-1zM828 356h1v1h-1zM828 369h1v1h-1zM828 383h1v1h-1zM828 396h1v1h-1zM828 410h1v1h-1zM828 424h1v1h-1zM828 437h1v1h-1zM828 451h1v1h-1zM828 464h1v1h-1zM828 478h1v1h-1zM828 491h1v1h-1zM828 505h1v1h-1zM828 519h1v1h-1zM828 532h1v1h-1zM828 546h1v1h-1zM828 559h1v1h-1zM828 573h1v1h-1zM828 586h1v1h-1zM828 600h1v1h-1zM828 614h1v1h-1zM828 627h1v1h-1zM828 641h1v1h-1zM828 654h1v1h-1zM828 668h1v1h-1zM929 152h1v1h-1zM929 166h1v1h-1zM929 179h1v1h-1zM929 193h1v1h-1zM929 206h1v1h-1zM929 220h1v1h-1zM929 234h1v1h-1zM929 247h1v1h-1zM929 261h1v1h-1zM929 274h1v1h-1zM929 288h1v1h-1zM929 301h1v1h-1zM929 315h1v1h-1zM929 329h1v1h-1zM929 342h1v1h-1zM929 356h1v1h-1zM929 369h1v1h-1zM929 383h1v1h-1zM929 396h1v1h-1zM929 410h1v1h-1zM929 424h1v1h-1zM929 437h1v1h-1zM929 451h1v1h-1zM929 464h1v1h-1zM929 478h1v1h-1zM929 491h1v1h-1zM929 505h1v1h-1zM929 519h1v1h-1zM929 532h1v1h-1zM929 546h1v1h-1zM929 559h1v1h-1zM929 573h1v1h-1zM929 586h1v1h-1zM929 600h1v1h-1zM929 614h1v1h-1zM929 627h1v1h-1zM929 641h1v1h-1zM929 654h1v1h-1zM929 668h1v1h-1z" fill="#c8c8c8"/>
<rect x="24" y="410" width="1005" height="1" fill="#e0e0e0"/>
<rect x="526" y="140" width="1" height="541" fill="#e0e0e0"/>
<path d="M43 140h1v4h-1zM43 677h1v4h-1zM43 406h1v9h-1zM63 140h1v4h-1zM63 677h1v4h-1zM63 406h1v9h-1zM83 140h1v4h-1zM83 677h1v4h-1zM83 406h1v9h-1zM103 140h1v4h-1zM103 677h1v4h-1zM103 406h1v9h-1zM123 140h1v7h-1zM123 674h1v7h-1zM123 406h1v9h-1zM143 140h1v4h-1zM143 677h1v4h-1zM143 406h1v9h-1zM163 140h1v4h-1zM163 677h1v4h-1zM163 406h1v9h-1zM184 140h1v4h-1zM184 677h1v4h-1zM184 406h1v9h-1zM204 140h1v4h-1zM204 677h1v4h-1zM204 406h1v9h-1zM224 140h1v7h-1zM224 674h1v7h-1zM224 406h1v9h-1zM244 140h1v4h-1zM244 677h1v4h-1zM244 406h1v9h-1zM264 140h1v4h-1zM264 677h1v4h-1zM264 406h1v9h-1zM284 140h1v4h-1zM284 677h1v4h-1zM284 406h1v9h-1zM304 140h1v4h-1zM304 677h1v4h-1zM304 406h1v9h-1zM325 140h1v7h-1zM325 674h1v7h-1zM325 406h1v9h-1zM345 140h1v4h-1zM345 677h1v4h-1zM345 406h1v9h-1zM365 140h1v4h-1zM365 677h1v4h-1zM365 406h1v9h-1zM385 140h1v4h-1zM385 677h1v4h-1zM385 406h1v9h-1zM405 140h1v4h-1zM405 677h1v4h-1zM405 406h1v9h-1zM425 140h1v7h-1zM425 674h1v7h-1zM425 406h1v9h-1zM445 140h1v4h-1zM445 677h1v4h-1zM445 406h1v9h-1zM466 140h1v4h-1zM466 677h1v4h-1zM466 406h1v9h-1zM486 140h1v4h-1zM486 677h1v4h-1zM486 406h1v9h-1zM506 140h1v4h-1zM506 677h1v4h-1zM506 406h1v9h-1zM526 140h1v7h-1zM526 674h1v7h-1zM526 406h1v9h-1zM546 140h1v4h-1zM546 677h1v4h-1zM546 406h1v9h-1zM566 140h1v4h-1zM566 677h1v4h-1zM566 406h1v9h-1zM586 140h1v4h-1zM586 677h1v4h-1zM586 406h1v9h-1zM607 140h1v4h-1zM607 677h1v4h-1zM607 406h1v9h-1zM627 140h1v7h-1zM627 674h1v7h-1zM627 406h1v9h-1zM647 140h1v4h-1zM647 677h1v4h-1zM647 406h1v9h-1zM667 140h1v4h-1zM667 677h1v4h-1zM667 406h1v9h-1zM687 140h1v4h-1zM687 677h1v4h-1zM687 406h1v9h-1zM707 140h1v4h-1zM707 677h1v4h-1zM707 406h1v9h-1zM727 140h1v7h-1zM727 674h1v7h-1zM727 406h1v9h-1zM748 140h1v4h-1zM748 677h1v4h-1zM748 406h1v9h-1zM768 140h1v4h-1zM768 677h1v4h-1zM768 406h1v9h-1zM788 140h1v4h-1zM788 677h1v4h-1zM788 406h1v9h-1zM808 140h1v4h-1zM808 677h1v4h-1zM808 406h1v9h-1zM828 140h1v7h-1zM828 674h1v7h-1zM828 406h1v9h-1zM848 140h1v4h-1zM848 677h1v4h-1zM848 406h1v9h-1zM868 140h1v4h-1zM868 677h1v4h-1zM868 406h1v9h-1zM889 140h1v4h-1zM889 677h1v4h-1zM889 406h1v9h-1zM909 140h1v4h-1zM909 677h1v4h-1zM909 406h1v9h-1zM929 140h1v7h-1zM929 674h1v7h-1zM929 406h1v9h-1zM949 140h1v4h-1zM949 677h1v4h-1zM949 406h1v9h-1zM969 140h1v4h-1zM969 677h1v4h-1zM969 406h1v9h-1zM989 140h1v4h-1zM989 677h1v4h-1zM989 406h1v9h-1zM1009 140h1v4h-1zM1009 677h1v4h-1zM1009 406h1v9h-1zM24 152h4v1h-4zM1025 152h4v1h-4zM522 152h9v1h-9zM24 166h4v1h-4zM1025 166h4v1h-4zM522 166h9v1h-9zM24 179h4v1h-4zM1025 179h4v1h-4zM522 179h9v1h-9zM24 193h4v1h-4zM1025 193h4v1h-4zM522 193h9v1h-9zM24 206h7v1h-7zM1022 206h7v1h-7zM522 206h9v1h-9zM24 220h4v1h-4zM1025 220h4v1h-4zM522 220h9v1h-9zM24 234h4v1h-4zM1025 234h4v1h-4zM522 234h9v1h-9zM24 247h4v1h-4zM1025 247h4v1h-4zM522 247h9v1h-9zM24 261h4v1h-4zM1025 261h4v1h-4zM522 261h9v1h-9zM24 274h7v1h-7zM1022 274h7v1h-7zM522 274h9v1h-9zM24 288h4v1h-4zM1025 288h4v1h-4zM522 288h9v1h-9zM24 301h4v1h-4zM1025 301h4v1h-4zM522 301h9v1h-9zM24 315h4v1h-4zM1025 315h4v1h-4zM522 315h9v1h-9zM24 329h4v1h-4zM1025 329h4v1h-4zM522 329h9v1h-9zM24 342h7v1h-7zM1022 342h7v1h-7zM522 342h9v1h-9zM24 356h4v1h-4zM1025 356h4v1h-4zM522 356h9v1h-9zM24 369h4v1h-4zM1025 369h4v1h-4zM522 369h9v1h-9zM24 383h4v1h-4zM1025 383h4v1h-4zM522 383h9v1h-9zM24 396h4v1h-4zM1025 396h4v1h-4zM522 396h9v1h-9zM24 410h7v1h-7zM1022 410h7v1h-7zM522 410h9v1h-9zM24 424h4v1h-4zM1025 424h4v1h-4zM522 424h9v1h-9zM24 437h4v1h-4zM1025 437h4v1h-4zM522 437h9v1h-9zM24 451h4v1h-4zM1025 451h4v1h-4zM522 451h9v1h-9zM24 464h4v1h-4zM1025 464h4v1h-4zM522 464h9v1h-9zM24 478h7v1h-7zM1022 478h7v1h-7zM522 478h9v1h-9zM24 491h4v1h-4zM1025 491h4v1h-4zM522 491h9v1h-9zM24 505h4v1h-4zM1025 505h4v1h-4zM522 505h9v1h-9zM24 519h4v1h-4zM1025 519h4v1h-4zM522 519h9v1h-9zM24 532h4v1h-4zM1025 532h4v1h-4zM522 532h9v1h-9zM24 546h7v1h-7zM1022 546h7v1h-7zM522 546h9v1h-9zM24 559h4v1h-4zM1025 559h4v1h-4zM522 559h9v1h-9zM24 573h4v1h-4zM1025 573h4v1h-4zM522 573h9v1h-9zM24 586h4v1h-4zM1025 586h4v1h-4zM522 586h9v1h-9zM24 600h4v1h-4zM1025 600h4v1h-4zM522 600h9v1h-9zM24 614h7v1h-7zM1022 614h7v1h-7zM522 614h9v1h-9zM24 627h4v1h-4zM1025 627h4v1h-4zM522 627h9v1h-9zM24 641h4v1h-4zM1025 641h4v1h-4zM522 641h9v1h-9zM24 654h4v1h-4zM1025 654h4v1h-4zM522 654h9v1h-9zM24 668h4v1h-4zM1025 668h4v1h-4zM522 668h9v1h-9z" fill="#e0e0e0"/>
<g transform="translate(0.5,0.5)">
<polyline points="24,272 25,272 26,272 26,274 27,274 27,277 28,277 28,280 29,280 29,283 30,283 31,283 31,285 32,285 32,288 33,288 33,291 34,291 35,291 35,294 36,294 36,296 37,296 37,299 38,299 39,299 39,302 40,302 40,304 41,304 42,304 42,307 43,307 43,310 44,310 45,310 45,313 46,313 46,315 47,315 48,315 48,318 49,318 49,321 50,321 51,321 51,323 52,323 53,323 53,326 54,326 55,326 55,329 56,329 57,329 57,332 58,332 59,332 59,334 60,334 61,334 61,337 62,337 63,337 64,337 64,340 65,340 66,340 67,340 68,340 68,342 69,342 70,342 71,342 72,342 73,342 74,342 75,342 76,342 77,342 78,342 79,342 80,342 81,342 82,342 83,342 84,342 85,342 85,340 86,340 87,340 88,340 89,340 89,337 90,337 91,337 92,337 92,334 93,334 94,334 94,332 95,332 96,332 96,329 97,329 98,329 98,326 99,326 100,326 100,323 101,323 102,323 102,321 103,321 104,321 104,318 105,318 105,315 106,315 107,315 107,313 108,313 108,310 109,310 110,310 110,307 111,307 111,304 112,304 113,304 113,302 114,302 114,299 115,299 116,299 116,296 117,296 117,294 118,294 118,291 119,291 120,291 120,288 121,288 121,285 122,285 122,283 123,283 124,283 124,280 125,280 125,277 126,277 126,274 127,274 127,272 128,272 129,272 129,269 130,269 130,266 131,266 131,264 132,264 133,264 133,261 134,261 134,258 135,258 136,258 136,255 137,255 137,253 138,253 138,250 139,250 140,250 140,247 141,247 141,245 142,245 143,245 143,242 144,242 145,242 145,239 146,239 146,236 147,236 148,236 148,234 149,234 150,234 150,231 151,231 152,231 152,228 153,228 154,228 154,226 155,226 156,226 156,223 157,223 158,223 158,220 159,220 160,220 161,220 161,217 162,217 163,217 164,217 164,215 165,215 166,215 167,215 168,215 169,215 169,212 170,212 171,212 172,212 173,212 174,212 175,212 176,212 177,212 178,212 179,212 180,212 181,212 182,212 183,212 184,212 185,212 185,215 186,215 187,215 188,215 189,215 190,215 190,217 191,217 192,217 193,217 193,220 194,220 195,220 196,220 196,223 197,223 198,223 198,226 199,226 200,226 201,226 201,228 202,228 203,228 203,231 204,231 205,231 205,234 206,234 206,236 207,236 208,236 208,239 209,239 210,239 210,242 211,242 211,245 212,245 213,245 213,247 214,247 214,250 215,250 216,250 216,253 217,253 217,255 218,255 219,255 219,258 220,258 220,261 221,261 222,261 222,264 223,264 223,266 224,266 224,269 225,269 226,269 226,272 227,272 227,274 228,274 228,277 229,277 230,277 230,280 231,280 231,283 232,283 232,285 233,285 234,285 234,288 235,288 235,291 236,291 236,294 237,294 237,296 238,296 239,296 239,299 240,299 240,302 241,302 242,302 242,304 243,304 243,307 244,307 244,310 245,310 246,310 246,313 247,313 247,315 248,315 249,315 249,318 250,318 251,318 251,321 252,321 252,323 253,323 254,323 254,326 255,326 256,326 256,329 257,329 258,329 258,332 259,332 260,332 260,334 261,334 262,334 263,334 263,337 264,337 265,337 266,337 266,340 267,340 268,340 269,340 270,340 270,342 271,342 272,342 273,342 274,342 275,342 276,342 277,342 278,342 279,342 280,342 281,342 282,342 283,342 284,342 285,342 286,342 286,340 287,340 288,340 289,340 290,340 290,337 291,337 292,337 293,337 293,334 294,334 295,334 296,334 296,332 297,332 298,332 298,329 299,329 300,329 300,326 301,326 302,326 302,323 303,323 303,321 304,321 305,321 305,318 306,318 307,318 307,315 308,315 308,313 309,313 310,313 310,310 311,310 311,307 312,307 313,307 313,304 314,304 314,302 315,302 316,302 316,299 317,299 317,296 318,296 318,294 319,294 320,294 320,291 321,291 321,288 322,288 322,285 323,285 324,285 324,283 325,283 325,280 326,280 326,277 327,277 328,277 328,274 329,274 329,272 330,272 330,269 331,269 332,269 332,266 333,266 333,264 334,264 334,261 335,261 336,261 336,258 337,258 337,255 338,255 338,253 339,253 340,253 340,250 341,250 341,247 342,247 343,247 343,245 344,245 344,242 345,242 346,242 346,239 347,239 348,239 348,236 349,236 349,234 350,234 351,234 351,231 352,231 353,231 353,228 354,228 355,228 355,226 356,226 357,226 357,223 358,223 359,223 360,223 360,220 361,220 362,220 363,220 363,217 364,217 365,217 366,217 366,215 367,215 368,215 369,215 370,215 370,212 371,212 372,212 373,212 374,212 375,212 376,212 377,212 378,212 379,212 380,212 381,212 382,212 383,212 384,212 385,212 386,212 387,212 387,215 388,215 389,215 390,215 391,215 391,217 392,217 393,217 394,217 395,217 395,220 396,220 397,220 397,223 398,223 399,223 400,223 400,226 401,226 402,226 402,228 403,228 404,228 404,231 405,231 406,231 406,234 407,234 408,234 408,236 409,236 410,236 410,239 411,239 411,242 412,242 413,242 413,245 414,245 414,247 415,247 416,247 416,250 417,250 417,253 418,253 419,253 419,255 420,255 420,258 421,258 422,258 422,261 423,261 423,264 424,264 424,266 425,266 426,266 426,269 427,269 427,272 428,272 428,274 429,274 430,274 430,277 431,277 431,280 432,280 432,283 433,283 434,283 434,285 435,285 435,288 436,288 436,291 437,291 438,291 438,294 439,294 439,296 440,296 440,299 441,299 442,299 442,302 443,302 443,304 444,304 444,307 445,307 446,307 446,310 447,310 447,313 448,313 449,313 449,315 450,315 450,318 451,318 452,318 452,321 453,321 454,321 454,323 455,323 456,323 456,326 457,326 457,329 458,329 459,329 459,332 460,332 461,332 462,332 462,334 463,334 464,334 464,337 465,337 466,337 467,337 467,340 468,340 469,340 470,340 471,340 471,342 472,342 473,342 474,342 475,342 476,342 477,342 478,342 479,342 480,342 481,342 482,342 483,342 484,342 485,342 486,342 487,342 488,342 488,340 489,340 490,340 491,340 491,337 492,337 493,337 494,337 494,334 495,334 496,334 497,334 497,332 498,332 499,332 499,329 500,329 501,329 501,326 502,326 503,326 503,323 504,323 505,323 505,321 506,321 507,321 507,318 508,318 508,315 509,315 510,315 510,313 511,313 511,310 512,310 513,310 513,307 514,307 514,304 515,304 516,304 516,302 517,302 517,299 518,299 518,296 519,296 520,296 520,294 521,294 521,291 522,291 522,288 523,288 524,288 524,285 525,285 525,283 526,283 526,280 527,280 528,280 528,277 529,277 529,274 530,274 530,272 531,272 532,272 532,269 533,269 533,266 534,266 534,264 535,264 536,264 536,261 537,261 537,258 538,258 538,255 539,255 540,255 540,253 541,253 541,250 542,250 543,250 543,247 544,247 544,245 545,245 546,245 546,242 547,242 547,239 548,239 549,239 549,236 550,236 551,236 551,234 552,234 553,234 553,231 554,231 555,231 555,228 556,228 557,228 557,226 558,226 559,226 559,223 560,223 561,223 561,220 562,220 563,220 564,220 564,217 565,217 566,217 567,217 567,215 568,215 569,215 570,215 571,215 572,215 572,212 573,212 574,212 575,212 576,212 577,212 578,212 579,212 580,212 581,212 582,212 583,212 584,212 585,212 586,212 587,212 588,212 588,215 589,215 590,215 591,215 592,215 593,215 593,217 594,217 595,217 596,217 596,220 597,220 598,220 599,220 599,223 600,223 601,223 601,226 602,226 603,226 603,228 604,228 605,228 605,231 606,231 607,231 607,234 608,234 609,234 609,236 610,236 611,236 611,239 612,239 613,239 613,242 614,242 614,245 615,245 616,245 616,247 617,247 617,250 618,250 619,250 619,253 620,253 620,255 621,255 622,255 622,258 623,258 623,261 624,261 624,264 625,264 626,264 626,266 627,266 627,269 628,269 628,272 629,272 630,272 630,274 631,274 631,277 632,277 632,280 633,280 634,280 634,283 635,283 635,285 636,285 636,288 637,288 638,288 638,291 639,291 639,294 640,294 640,296 641,296 642,296 642,299 643,299 643,302 644,302 644,304 645,304 646,304 646,307 647,307 647,310 648,310 649,310 649,313 650,313 650,315 651,315 652,315 652,318 653,318 653,321 654,321 655,321 655,323 656,323 657,323 657,326 658,326 659,326 659,329 660,329 661,329 661,332 662,332 663,332 663,334 664,334 665,334 666,334 666,337 667,337 668,337 669,337 669,340 670,340 671,340 672,340 672,342 673,342 674,342 675,342 676,342 677,342 678,342 679,342 680,342 681,342 682,342 683,342 684,342 685,342 686,342 687,342 688,342 689,342 689,340 690,340 691,340 692,340 693,340 693,337 694,337 695,337 696,337 696,334 697,334 698,334 698,332 699,332 700,332 701,332 701,329 702,329 703,329 703,326 704,326 704,323 705,323 706,323 706,321 707,321 708,321 708,318 709,318 710,318 710,315 711,315 711,313 712,313 713,313 713,310 714,310 714,307 715,307 716,307 716,304 717,304 717,302 718,302 718,299 719,299 720,299 720,296 721,296 721,294 722,294 722,291 723,291 724,291 724,288 725,288 725,285 726,285 726,283 727,283 728,283 728,280 729,280 729,277 730,277 730,274 731,274 732,274 732,272 733,272 733,269 734,269 734,266 735,266 736,266 736,264 737,264 737,261 738,261 738,258 739,258 740,258 740,255 741,255 741,253 742,253 743,253 743,250 744,250 744,247 745,247 746,247 746,245 747,245 747,242 748,242 749,242 749,239 750,239 750,236 751,236 752,236 752,234 753,234 754,234 754,231 755,231 756,231 756,228 757,228 758,228 758,226 759,226 760,226 760,223 761,223 762,223 763,223 763,220 764,220 765,220 765,217 766,217 767,217 768,217 769,217 769,215 770,215 771,215 772,215 773,215 773,212 774,212 775,212 776,212 777,212 778,212 779,212 780,212 781,212 782,212 783,212 784,212 785,212 786,212 787,212 788,212 789,212 790,212 790,215 791,215 792,215 793,215 794,215 794,217 795,217 796,217 797,217 797,220 798,220 799,220 800,220 800,223 801,223 802,223 803,223 803,226 804,226 805,226 805,228 806,228 807,228 807,231 808,231 809,231 809,234 810,234 811,234 811,236 812,236 812,239 813,239 814,239 814,242 815,242 816,242 816,245 817,245 817,247 818,247 819,247 819,250 820,250 820,253 821,253 822,253 822,255 823,255 823,258 824,258 824,261 825,261 826,261 826,264 827,264 827,266 828,266 828,269 829,269 830,269 830,272 831,272 831,274 832,274 832,277 833,277 834,277 834,280 835,280 835,283 836,283 836,285 837,285 838,285 838,288 839,288 839,291 840,291 840,294 841,294 842,294 842,296 843,296 843,299 844,299 844,302 845,302 846,302 846,304 847,304 847,307 848,307 849,307 849,310 850,310 850,313 851,313 852,313 852,315 853,315 853,318 854,318 855,318 855,321 856,321 857,321 857,323 858,323 858,326 859,326 860,326 860,329 861,329 862,329 862,332 863,332 864,332 864,334 865,334 866,334 867,334 867,337 868,337 869,337 870,337 870,340 871,340 872,340 873,340 874,340 874,342 875,342 876,342 877,342 878,342 879,342 880,342 881,342 882,342 883,342 884,342 885,342 886,342 887,342 888,342 889,342 890,342 890,340 891,340 892,340 893,340 894,340 894,337 895,337 896,337 897,337 897,334 898,334 899,334 900,334 900,332 901,332 902,332 902,329 903,329 904,329 904,326 905,326 906,326 906,323 907,323 908,323 908,321 909,321 909,318 910,318 911,318 911,315 912,315 913,315 913,313 914,313 914,310 915,310 916,310 916,307 917,307 917,304 918,304 918,302 919,302 920,302 920,299 921,299 921,296 922,296 923,296 923,294 924,294 924,291 925,291 925,288 926,288 926,285 927,285 928,285 928,283 929,283 929,280 930,280 930,277 931,277 932,277 932,274 933,274 933,272 934,272 934,269 935,269 936,269 936,266 937,266 937,264 938,264 938,261 939,261 940,261 940,258 941,258 941,255 942,255 943,255 943,253 944,253 944,250 945,250 946,250 946,247 947,247 947,245 948,245 949,245 949,242 950,242 950,239 951,239 952,239 952,236 953,236 954,236 954,234 955,234 955,231 956,231 957,231 957,228 958,228 959,228 959,226 960,226 961,226 962,226 962,223 963,223 964,223 964,220 965,220 966,220 967,220 967,217 968,217 969,217 970,217 970,215 971,215 972,215 973,215 974,215 975,215 975,212 976,212 977,212 978,212 979,212 980,212 981,212 982,212 983,212 984,212 985,212 986,212 987,212 988,212 989,212 990,212 991,212 991,215 992,215 993,215 994,215 995,215 996,215 996,217 997,217 998,217 999,217 999,220 1000,220 1001,220 1002,220 1002,223 1003,223 1004,223 1004,226 1005,226 1006,226 1006,228 1007,228 1008,228 1008,231 1009,231 1010,231 1010,234 1011,234 1012,234 1012,236 1013,236 1014,236 1014,239 1015,239 1015,242 1016,242 1017,242 1017,245 1018,245 1019,245 1019,247 1020,247 1020,250 1021,250 1022,250 1022,253 1023,253 1023,255 1024,255 1024,258 1025,258 1026,258 1026,261 1027,261 1027,264 1028,264" fill="none" stroke="#f4f070" stroke-width="1" shape-rendering="crispEdges"/><g transform="translate(-0.5,-0.5)"><rect x="177" y="207" width="1" height="4" fill="#f4f070"/><rect x="580" y="207" width="1" height="4" fill="#f4f070"/><rect x="982" y="207" width="1" height="4" fill="#f4f070"/></g>
<polyline points="24,412 25,412 26,412 26,414 27,414 27,417 28,417 28,420 29,420 30,420 30,423 31,423 31,425 32,425 32,428 33,428 34,428 34,431 35,431 35,434 36,434 36,436 37,436 38,436 38,439 39,439 39,442 40,442 40,444 41,444 42,444 42,447 43,447 43,450 44,450 45,450 45,453 46,453 46,455 47,455 48,455 48,458 49,458 49,461 50,461 51,461 51,463 52,463 53,463 53,466 54,466 55,466 55,469 56,469 57,469 57,472 58,472 59,472 59,474 60,474 61,474 62,474 62,477 63,477 64,477 65,477 65,480 66,480 67,480 68,480 68,482 69,482 70,482 71,482 72,482 73,482 74,482 75,482 76,482 77,482 78,482 79,482 80,482 81,482 82,482 83,482 84,482 85,482 85,480 86,480 87,480 88,480 89,480 89,477 90,477 91,477 92,477 92,474 93,474 94,474 94,472 95,472 96,472 97,472 97,469 98,469 99,469 99,466 100,466 100,463 101,463 102,463 102,461 103,461 104,461 104,458 105,458 106,458 106,455 107,455 107,453 108,453 109,453 109,450 110,450 110,447 111,447 112,447 112,444 113,444 113,442 114,442 114,439 115,439 116,439 116,436 117,436 117,434 118,434 118,431 119,431 120,431 120,428 121,428 121,425 122,425 122,423 123,423 124,423 124,420 125,420 125,417 126,417 126,414 127,414 128,414 128,412 129,412 129,409 130,409 130,406 131,406 132,406 132,404 133,404 133,401 134,401 134,398 135,398 136,398 136,395 137,395 137,393 138,393 139,393 139,390 140,390 140,387 141,387 142,387 142,385 143,385 143,382 144,382 145,382 145,379 146,379 146,376 147,376 148,376 148,374 149,374 150,374 150,371 151,371 152,371 152,368 153,368 154,368 154,366 155,366 156,366 156,363 157,363 158,363 159,363 159,360 160,360 161,360 161,357 162,357 163,357 164,357 165,357 165,355 166,355 167,355 168,355 169,355 169,352 170,352 171,352 172,352 173,352 174,352 175,352 176,352 177,352 178,352 179,352 180,352 181,352 182,352 183,352 184,352 185,352 186,352 186,355 187,355 188,355 189,355 190,355 190,357 191,357 192,357 193,357 193,360 194,360 195,360 196,360 196,363 197,363 198,363 199,363 199,366 200,366 201,366 201,368 202,368 203,368 203,371 204,371 205,371 205,374 206,374 207,374 207,376 208,376 208,379 209,379 210,379 210,382 211,382 212,382 212,385 213,385 213,387 214,387 215,387 215,390 216,390 216,393 217,393 218,393 218,395 219,395 219,398 220,398 220,401 221,401 222,401 222,404 223,404 223,406 224,406 224,409 225,409 226,409 226,412 227,412 227,414 228,414 228,417 229,417 230,417 230,420 231,420 231,423 232,423 232,425 233,425 234,425 234,428 235,428 235,431 236,431 236,434 237,434 238,434 238,436 239,436 239,439 240,439 240,442 241,442 242,442 242,444 243,444 243,447 244,447 245,447 245,450 246,450 246,453 247,453 248,453 248,455 249,455 249,458 250,458 251,458 251,461 252,461 253,461 253,463 254,463 254,466 255,466 256,466 256,469 257,469 258,469 258,472 259,472 260,472 260,474 261,474 262,474 263,474 263,477 264,477 265,477 266,477 266,480 267,480 268,480 269,480 270,480 270,482 271,482 272,482 273,482 274,482 275,482 276,482 277,482 278,482 279,482 280,482 281,482 282,482 283,482 284,482 285,482 286,482 286,480 287,480 288,480 289,480 290,480 290,477 291,477 292,477 293,477 293,474 294,474 295,474 296,474 296,472 297,472 298,472 298,469 299,469 300,469 300,466 301,466 302,466 302,463 303,463 304,463 304,461 305,461 305,458 306,458 307,458 307,455 308,455 309,455 309,453 310,453 310,450 311,450 312,450 312,447 313,447 313,444 314,444 314,442 315,442 316,442 316,439 317,439 317,436 318,436 319,436 319,434 320,434 320,431 321,431 321,428 322,428 322,425 323,425 324,425 324,423 325,423 325,420 326,420 326,417 327,417 328,417 328,414 329,414 329,412 330,412 330,409 331,409 332,409 332,406 333,406 333,404 334,404 334,401 335,401 336,401 336,398 337,398 337,395 338,395 339,395 339,393 340,393 340,390 341,390 342,390 342,387 343,387 343,385 344,385 345,385 345,382 346,382 346,379 347,379 348,379 348,376 349,376 350,376 350,374 351,374 351,371 352,371 353,371 353,368 354,368 355,368 355,366 356,366 357,366 358,366 358,363 359,363 360,363 360,360 361,360 362,360 363,360 363,357 364,357 365,357 366,357 366,355 367,355 368,355 369,355 370,355 371,355 371,352 372,352 373,352 374,352 375,352 376,352 377,352 378,352 379,352 380,352 381,352 382,352 383,352 384,352 385,352 386,352 387,352 387,355 388,355 389,355 390,355 391,355 392,355 392,357 393,357 394,357 395,357 395,360 396,360 397,360 398,360 398,363 399,363 400,363 400,366 401,366 402,366 402,368 403,368 404,368 404,371 405,371 406,371 406,374 407,374 408,374 408,376 409,376 410,376 410,379 411,379 411,382 412,382 413,382 413,385 414,385 415,385 415,387 416,387 416,390 417,390 418,390 418,393 419,393 419,395 420,395 420,398 421,398 422,398 422,401 423,401 423,404 424,404 425,404 425,406 426,406 426,409 427,409 427,412 428,412 429,412 429,414 430,414 430,417 431,417 431,420 432,420 432,423 433,423 434,423 434,425 435,425 435,428 436,428 436,431 437,431 438,431 438,434 439,434 439,436 440,436 440,439 441,439 442,439 442,442 443,442 443,444 444,444 445,444 445,447 446,447 446,450 447,450 448,450 448,453 449,453 449,455 450,455 451,455 451,458 452,458 452,461 453,461 454,461 454,463 455,463 456,463 456,466 457,466 458,466 458,469 459,469 460,469 460,472 461,472 462,472 462,474 463,474 464,474 464,477 465,477 466,477 467,477 467,480 468,480 469,480 470,480 471,480 471,482 472,482 473,482 474,482 475,482 476,482 477,482 478,482 479,482 480,482 481,482 482,482 483,482 484,482 485,482 486,482 487,482 488,482 488,480 489,480 490,480 491,480 492,480 492,477 493,477 494,477 495,477 495,474 496,474 497,474 497,472 498,472 499,472 499,469 500,469 501,469 501,466 502,466 503,466 503,463 504,463 505,463 505,461 506,461 507,461 507,458 508,458 508,455 509,455 510,455 510,453 511,453 511,450 512,450 513,450 513,447 514,447 514,444 515,444 516,444 516,442 517,442 517,439 518,439 519,439 519,436 520,436 520,434 521,434 521,431 522,431 523,431 523,428 524,428 524,425 525,425 525,423 526,423 527,423 527,420 528,420 528,417 529,417 529,414 530,414 530,412 531,412 532,412 532,409 533,409 533,406 534,406 534,404 535,404 536,404 536,401 537,401 537,398 538,398 539,398 539,395 540,395 540,393 541,393 541,390 542,390 543,390 543,387 544,387 544,385 545,385 546,385 546,382 547,382 548,382 548,379 549,379 549,376 550,376 551,376 551,374 552,374 553,374 553,371 554,371 555,371 555,368 556,368 557,368 557,366 558,366 559,366 559,363 560,363 561,363 561,360 562,360 563,360 564,360 564,357 565,357 566,357 567,357 567,355 568,355 569,355 570,355 571,355 572,355 572,352 573,352 574,352 575,352 576,352 577,352 578,352 579,352 580,352 581,352 582,352 583,352 584,352 585,352 586,352 587,352 588,352 588,355 589,355 590,355 591,355 592,355 593,355 593,357 594,357 595,357 596,357 596,360 597,360 598,360 599,360 599,363 600,363 601,363 601,366 602,366 603,366 604,366 604,368 605,368 606,368 606,371 607,371 608,371 608,374 609,374 609,376 610,376 611,376 611,379 612,379 613,379 613,382 614,382 614,385 615,385 616,385 616,387 617,387 617,390 618,390 619,390 619,393 620,393 620,395 621,395 622,395 622,398 623,398 623,401 624,401 625,401 625,404 626,404 626,406 627,406 627,409 628,409 629,409 629,412 630,412 630,414 631,414 631,417 632,417 633,417 633,420 634,420 634,423 635,423 635,425 636,425 637,425 637,428 638,428 638,431 639,431 639,434 640,434 640,436 641,436 642,436 642,439 643,439 643,442 644,442 645,442 645,444 646,444 646,447 647,447 647,450 648,450 649,450 649,453 650,453 650,455 651,455 652,455 652,458 653,458 654,458 654,461 655,461 655,463 656,463 657,463 657,466 658,466 659,466 659,469 660,469 661,469 661,472 662,472 663,472 663,474 664,474 665,474 666,474 666,477 667,477 668,477 669,477 669,480 670,480 671,480 672,480 673,480 673,482 674,482 675,482 676,482 677,482 678,482 679,482 680,482 681,482 682,482 683,482 684,482 685,482 686,482 687,482 688,482 689,482 689,480 690,480 691,480 692,480 693,480 693,477 694,477 695,477 696,477 696,474 697,474 698,474 699,474 699,472 700,472 701,472 701,469 702,469 703,469 703,466 704,466 705,466 705,463 706,463 706,461 707,461 708,461 708,458 709,458 710,458 710,455 711,455 711,453 712,453 713,453 713,450 714,450 714,447 715,447 716,447 716,444 717,444 717,442 718,442 719,442 719,439 720,439 720,436 721,436 721,434 722,434 723,434 723,431 724,431 724,428 725,428 725,425 726,425 727,425 727,423 728,423 728,420 729,420 729,417 730,417 731,417 731,414 732,414 732,412 733,412 733,409 734,409 735,409 735,406 736,406 736,404 737,404 737,401 738,401 739,401 739,398 740,398 740,395 741,395 741,393 742,393 743,393 743,390 744,390 744,387 745,387 746,387 746,385 747,385 747,382 748,382 749,382 749,379 750,379 751,379 751,376 752,376 752,374 753,374 754,374 754,371 755,371 756,371 756,368 757,368 758,368 758,366 759,366 760,366 760,363 761,363 762,363 763,363 763,360 764,360 765,360 766,360 766,357 767,357 768,357 769,357 769,355 770,355 771,355 772,355 773,355 773,352 774,352 775,352 776,352 777,352 778,352 779,352 780,352 781,352 782,352 783,352 784,352 785,352 786,352 787,352 788,352 789,352 790,352 790,355 791,355 792,355 793,355 794,355 794,357 795,357 796,357 797,357 798,357 798,360 799,360 800,360 800,363 801,363 802,363 803,363 803,366 804,366 805,366 805,368 806,368 807,368 807,371 808,371 809,371 809,374 810,374 811,374 811,376 812,376 813,376 813,379 814,379 814,382 815,382 816,382 816,385 817,385 817,387 818,387 819,387 819,390 820,390 820,393 821,393 822,393 822,395 823,395 823,398 824,398 825,398 825,401 826,401 826,404 827,404 827,406 828,406 829,406 829,409 830,409 830,412 831,412 831,414 832,414 833,414 833,417 834,417 834,420 835,420 835,423 836,423 837,423 837,425 838,425 838,428 839,428 839,431 840,431 841,431 841,434 842,434 842,436 843,436 843,439 844,439 845,439 845,442 846,442 846,444 847,444 847,447 848,447 849,447 849,450 850,450 850,453 851,453 852,453 852,455 853,455 853,458 854,458 855,458 855,461 856,461 857,461 857,463 858,463 859,463 859,466 860,466 860,469 861,469 862,469 862,472 863,472 864,472 865,472 865,474 866,474 867,474 867,477 868,477 869,477 870,477 870,480 871,480 872,480 873,480 874,480 874,482 875,482 876,482 877,482 878,482 879,482 880,482 881,482 882,482 883,482 884,482 885,482 886,482 887,482 888,482 889,482 890,482 891,482 891,480 892,480 893,480 894,480 894,477 895,477 896,477 897,477 897,474 898,474 899,474 900,474 900,472 901,472 902,472 902,469 903,469 904,469 904,466 905,466 906,466 906,463 907,463 908,463 908,461 909,461 910,461 910,458 911,458 911,455 912,455 913,455 913,453 914,453 914,450 915,450 916,450 916,447 917,447 917,444 918,444 919,444 919,442 920,442 920,439 921,439 921,436 922,436 923,436 923,434 924,434 924,431 925,431 925,428 926,428 927,428 927,425 928,425 928,423 929,423 929,420 930,420 931,420 931,417 932,417 932,414 933,414 933,412 934,412 935,412 935,409 936,409 936,406 937,406 937,404 938,404 939,404 939,401 940,401 940,398 941,398 941,395 942,395 943,395 943,393 944,393 944,390 945,390 946,390 946,387 947,387 947,385 948,385 949,385 949,382 950,382 950,379 951,379 952,379 952,376 953,376 954,376 954,374 955,374 956,374 956,371 957,371 958,371 958,368 959,368 960,368 960,366 961,366 962,366 962,363 963,363 964,363 964,360 965,360 966,360 967,360 967,357 968,357 969,357 970,357 970,355 971,355 972,355 973,355 974,355 975,355 975,352 976,352 977,352 978,352 979,352 980,352 981,352 982,352 983,352 984,352 985,352 986,352 987,352 988,352 989,352 990,352 991,352 991,355 992,355 993,355 994,355 995,355 996,355 996,357 997,357 998,357 999,357 999,360 1000,360 1001,360 1002,360 1002,363 1003,363 1004,363 1004,366 1005,366 1006,366 1006,368 1007,368 1008,368 1008,371 1009,371 1010,371 1010,374 1011,374 1012,374 1012,376 1013,376 1014,376 1014,379 1015,379 1016,379 1016,382 1017,382 1017,385 1018,385 1019,385 1019,387 1020,387 1020,390 1021,390 1022,390 1022,393 1023,393 1023,395 1024,395 1025,395 1025,398 1026,398 1026,401 1027,401 1027,404 1028,404" fill="none" stroke="#f8f8f8" stroke-width="1" shape-rendering="crispEdges"/><g transform="translate(-0.5,-0.5)"><rect x="177" y="347" width="1" height="4" fill="#f8f8f8"/><rect x="378" y="347" width="1" height="4" fill="#f8f8f8"/><rect x="982" y="347" width="1" height="4" fill="#f8f8f8"/></g>
<polyline points="24,476 27,476 27,613 29,613 29,610 31,610 31,613 128,613 128,471 128,476 130,476 130,475 228,475 228,613 230,613 230,610 232,610 232,613 330,613 330,471 330,476 332,476 332,475 430,475 430,613 432,613 432,610 434,610 434,613 531,613 531,471 531,476 533,476 533,475 631,475 631,613 633,613 633,610 635,610 635,613 732,613 732,471 732,476 734,476 734,475 832,475 832,613 834,613 834,610 836,610 836,613 934,613 934,471 934,476 936,476 936,475 1028,475" fill="none" stroke="#c0f2ee" stroke-width="1" shape-rendering="crispEdges"/>
</g>
<path d="M4 265 H16 L21.5 270.5 L16 276 H4 Z" fill="#f0f040"/><text x="10.5" y="274.5" text-anchor="middle" font-family="Liberation Sans, sans-serif" font-size="11" fill="#000">1</text>
<path d="M4 405.5 H16 L21.5 411.0 L16 416.5 H4 Z" fill="#ffffff"/><text x="10.5" y="415.0" text-anchor="middle" font-family="Liberation Sans, sans-serif" font-size="11" fill="#000">R</text>
<path d="M4 536.8 H16 L21.5 542.3 L16 547.8 H4 Z" fill="#a8f4f4"/><text x="10.5" y="546.3" text-anchor="middle" font-family="Liberation Sans, sans-serif" font-size="11" fill="#000">2</text>
<path d="M1032 277.5 L1037 272 H1049 V283 H1037 Z" fill="#f0f040"/><text x="1043" y="281.5" text-anchor="middle" font-family="Liberation Sans, sans-serif" font-size="11" fill="#000">T</text>
<path d="M521 123 H532 V133 L526.5 137.5 L521 133 Z" fill="#f0a030"/><text x="526.5" y="133" text-anchor="middle" font-family="Liberation Sans, sans-serif" font-size="10.5" fill="#201000">T</text>
<text x="952.5" y="166" font-family="Liberation Sans, sans-serif" font-size="12" font-weight="bold" fill="#c8f0f0">1.00000KHz</text>
<rect x="23" y="686" width="92" height="19" fill="#000"/>
<text x="25" y="700" font-family="Liberation Sans, sans-serif" font-size="12.3" fill="#f0f070">CH1</text>
<path d="M53.5 697.5 V694.5 L55.5 692.5 L57.5 694.5 V696.5 L59.5 698.5 L61.5 696.5 V693.5" fill="none" stroke="#f0f0d8" stroke-width="1.1"/>
<text x="67.5" y="700" font-family="Liberation Sans, sans-serif" font-size="12.3" fill="#f0f070">500mV</text>
<rect x="133" y="686" width="92" height="19" fill="#000"/>
<rect x="134" y="688" width="27.5" height="15" fill="#a8f0f8"/>
<text x="135" y="700" font-family="Liberation Sans, sans-serif" font-size="12.3" fill="#103030">CH2</text>
<path d="M163.5 697.5 V694.5 L165.5 692.5 L167.5 694.5 V696.5 L169.5 698.5 L171.5 696.5 V693.5" fill="none" stroke="#e8f4f4" stroke-width="1.1"/>
<text x="177.5" y="700" font-family="Liberation Sans, sans-serif" font-size="12.3" fill="#c4dcf0">500mV</text>
<rect x="939" y="686" width="89.5" height="18.5" fill="#000"/>
<text x="941.5" y="700" font-family="Liberation Sans, sans-serif" font-size="12.3" fill="#e8a048">Time: 500.0us</text>
<text x="1063" y="112" font-family="Liberation Sans, sans-serif" font-size="11" fill="#1a1a1a">Connect:</text>
<circle cx="1120.6" cy="108.4" r="10.2" fill="#a6a6a6" stroke="#7e7e7e" stroke-width="1"/>
<rect x="1052" y="122" width="192" height="1" fill="#dcdcdc"/>
<rect x="1231" y="123" width="13" height="587" fill="#f4f4f4"/>
<path d="M1235 135 L1238 131.5 L1241 135" fill="none" stroke="#606060" stroke-width="1.8"/>
<rect x="1231" y="140" width="12.5" height="423.5" fill="#a8a8a8"/>
<rect x="1230" y="123" width="1" height="587" fill="#ffffff"/>
<path d="M1064 135.5 H1059.5 V244.5 H1226.5 V135.5 H1118" fill="none" stroke="#ffffff" stroke-width="1"/><path d="M1064 134.5 H1058.5 V243.5 H1225.5 V134.5 H1118" fill="none" stroke="#d8d8d8" stroke-width="1"/><text x="1067" y="138" font-family="Liberation Sans, sans-serif" font-size="11" fill="#1a1a1a">Horizontal</text>
<text x="1061.5" y="159" font-family="Liberation Sans, sans-serif" font-size="11" fill="#1a1a1a" textLength="47" lengthAdjust="spacingAndGlyphs">Time / DIV</text>
<rect x="1061.5" y="167.5" width="67" height="21" fill="#e5e5e5" stroke="#adadad" stroke-width="1"/><text x="1065" y="182" font-family="Liberation Sans, sans-serif" font-size="11" fill="#1a1a1a">500.0us</text><path d="M1116 176.5 L1120 180.5 L1124 176.5" fill="none" stroke="#404040" stroke-width="1.1"/>
<text x="1061.5" y="206" font-family="Liberation Sans, sans-serif" font-size="11" fill="#1a1a1a">Format</text>
<rect x="1061.5" y="216.5" width="67" height="21" fill="#e5e5e5" stroke="#adadad" stroke-width="1"/><text x="1065" y="231" font-family="Liberation Sans, sans-serif" font-size="11" fill="#505050">Y - T</text><path d="M1116 225.5 L1120 229.5 L1124 225.5" fill="none" stroke="#404040" stroke-width="1.1"/>
<g transform="translate(1178,190)"><path d="M-26.5 26.5 A37.5 37.5 0 1 1 26.5 26.5" fill="none" stroke="#202020" stroke-width="1.2"/><path d="M-25 25 A35.5 35.5 0 1 1 25 25" fill="none" stroke="#ffffff" stroke-width="1.5"/><circle r="34.5" fill="#a8a8a8" stroke="#9a9a9a" stroke-width="0.8"/><circle r="29" fill="#1e00d2" stroke="#14009a" stroke-width="1.4"/><path d="M-26 26 L-32 31 M26 26 L32 31" stroke="#101010" stroke-width="1.3"/><path d="M2 -8 L5 -23" stroke="#e0dca0" stroke-width="2"/></g>
<path d="M1064.5 259.5 H1059.5 V409.5 H1226.5 V259.5 H1106.5" fill="none" stroke="#ffffff" stroke-width="1"/><path d="M1064.5 258.5 H1058.5 V408.5 H1225.5 V258.5 H1106.5" fill="none" stroke="#d8d8d8" stroke-width="1"/><text x="1067.5" y="262" font-family="Liberation Sans, sans-serif" font-size="11" fill="#1a1a1a">Vertical</text>
<rect x="1061.5" y="275.5" width="67" height="21" fill="#e5e5e5" stroke="#adadad" stroke-width="1"/><text x="1065" y="290" font-family="Liberation Sans, sans-serif" font-size="11" fill="#1a1a1a">CH2</text><path d="M1116 284.5 L1120 288.5 L1124 284.5" fill="none" stroke="#404040" stroke-width="1.1"/>
<rect x="1061.5" y="303.5" width="67" height="20" fill="#f6f6f6" stroke="#a8a8a8" stroke-width="1"/>
<text x="1065" y="317" font-family="Liberation Sans, sans-serif" font-size="11" fill="#1a1a1a">500mV</text>
<rect x="1112.5" y="305.5" width="14" height="8" fill="#f0f0f0" stroke="#d0d0d0" stroke-width="1"/><rect x="1112.5" y="314.5" width="14" height="8" fill="#f0f0f0" stroke="#d0d0d0" stroke-width="1"/>
<path d="M1116.5 311 L1119.5 308 L1122.5 311 Z M1116.5 317 L1119.5 320 L1122.5 317 Z" fill="#202020"/>
<rect x="1061.5" y="330.5" width="67" height="21" fill="#e5e5e5" stroke="#adadad" stroke-width="1"/><text x="1065" y="345" font-family="Liberation Sans, sans-serif" font-size="11" fill="#1a1a1a">AC</text><path d="M1116 339.5 L1120 343.5 L1124 339.5" fill="none" stroke="#404040" stroke-width="1.1"/>
<rect x="1061.5" y="358.5" width="67" height="21" fill="#e5e5e5" stroke="#adadad" stroke-width="1"/><text x="1065" y="373" font-family="Liberation Sans, sans-serif" font-size="11" fill="#1a1a1a">x1</text><path d="M1116 367.5 L1120 371.5 L1124 367.5" fill="none" stroke="#404040" stroke-width="1.1"/>
<rect x="1134.5" y="277.5" width="12" height="12" fill="#fff" stroke="#333" stroke-width="1"/><path d="M1137 283.5 L1139.5 286.5 L1144.5 279.5" fill="none" stroke="#222" stroke-width="1.2"/>
<text x="1150" y="288" font-family="Liberation Sans, sans-serif" font-size="11" fill="#1a1a1a" textLength="37.5" lengthAdjust="spacingAndGlyphs">ON/OFF</text>
<g transform="translate(1178,340)"><path d="M-26.5 26.5 A37.5 37.5 0 1 1 26.5 26.5" fill="none" stroke="#202020" stroke-width="1.2"/><path d="M-25 25 A35.5 35.5 0 1 1 25 25" fill="none" stroke="#ffffff" stroke-width="1.5"/><circle r="34.5" fill="#a8a8a8" stroke="#9a9a9a" stroke-width="0.8"/><circle r="29" fill="#a4f8fa" stroke="#3c8080" stroke-width="1.4"/><path d="M-26 26 L-32 31 M26 26 L32 31" stroke="#101010" stroke-width="1.3"/><path d="M-4.5 -7.5 L-14 -19.5" stroke="#704848" stroke-width="2"/></g>
<path d="M1064.5 423.5 H1059.5 V662.5 H1226.5 V423.5 H1104.5" fill="none" stroke="#ffffff" stroke-width="1"/><path d="M1064.5 422.5 H1058.5 V661.5 H1225.5 V422.5 H1104.5" fill="none" stroke="#d8d8d8" stroke-width="1"/><text x="1067.5" y="426" font-family="Liberation Sans, sans-serif" font-size="11" fill="#1a1a1a">Trigger</text>
<text x="1061" y="451" font-family="Liberation Sans, sans-serif" font-size="11" fill="#1a1a1a">Trigger Mode</text>
<rect x="1148.5" y="436.5" width="67" height="21" fill="#e5e5e5" stroke="#adadad" stroke-width="1"/><text x="1152" y="451" font-family="Liberation Sans, sans-serif" font-size="11" fill="#1a1a1a">Edge</text><path d="M1203 445.5 L1207 449.5 L1211 445.5" fill="none" stroke="#404040" stroke-width="1.1"/>
<text x="1061" y="481" font-family="Liberation Sans, sans-serif" font-size="11" fill="#1a1a1a">Trigger Sweep</text>
<rect x="1148.5" y="466.5" width="67" height="21" fill="#e5e5e5" stroke="#adadad" stroke-width="1"/><text x="1152" y="481" font-family="Liberation Sans, sans-serif" font-size="11" fill="#1a1a1a">AUTO</text><path d="M1203 475.5 L1207 479.5 L1211 475.5" fill="none" stroke="#404040" stroke-width="1.1"/>
<text x="1061" y="511" font-family="Liberation Sans, sans-serif" font-size="11" fill="#1a1a1a">Trigger Source</text>
<rect x="1148.5" y="496.5" width="67" height="21" fill="#e5e5e5" stroke="#adadad" stroke-width="1"/><text x="1152" y="511" font-family="Liberation Sans, sans-serif" font-size="11" fill="#1a1a1a">CH1</text><path d="M1203 505.5 L1207 509.5 L1211 505.5" fill="none" stroke="#404040" stroke-width="1.1"/>
<text x="1061" y="540.5" font-family="Liberation Sans, sans-serif" font-size="11" fill="#1a1a1a">Trigger Slope</text>
<rect x="1148.5" y="527.5" width="67" height="21" fill="#e5e5e5" stroke="#adadad" stroke-width="1"/><text x="1152" y="542" font-family="Liberation Sans, sans-serif" font-size="11" fill="#1a1a1a">+</text><path d="M1203 536.5 L1207 540.5 L1211 536.5" fill="none" stroke="#404040" stroke-width="1.1"/>
<text x="1063" y="705" font-family="Liberation Sans, sans-serif" font-size="11" fill="#1a1a1a">Move Waveform</text>
<rect x="1143" y="700" width="80" height="1" fill="#dcdcdc"/>
<rect x="1142" y="708" width="67" height="1" fill="#8a8a8a"/>
<rect x="0" y="710" width="1244" height="18" fill="#f0f0f0"/>
<rect x="0" y="710" width="1244" height="1" fill="#dadada"/>
<rect x="1116" y="711" width="1" height="17" fill="#d0d0d0"/>
<text x="2.5" y="725" font-family="Liberation Sans, sans-serif" font-size="12.6" fill="#000">Connected</text>
<text x="1121" y="725" font-family="Liberation Sans, sans-serif" font-size="12.6" fill="#000" xml:space="preserve">28-04-2016  10:17</text>
<rect x="1241" y="717" width="2" height="2" fill="#b8b8b8"/><rect x="1238" y="720" width="2" height="2" fill="#b8b8b8"/><rect x="1241" y="720" width="2" height="2" fill="#b8b8b8"/><rect x="1235" y="723" width="2" height="2" fill="#b8b8b8"/><rect x="1238" y="723" width="2" height="2" fill="#b8b8b8"/><rect x="1241" y="723" width="2" height="2" fill="#b8b8b8"/>
</svg>
</body></html>
